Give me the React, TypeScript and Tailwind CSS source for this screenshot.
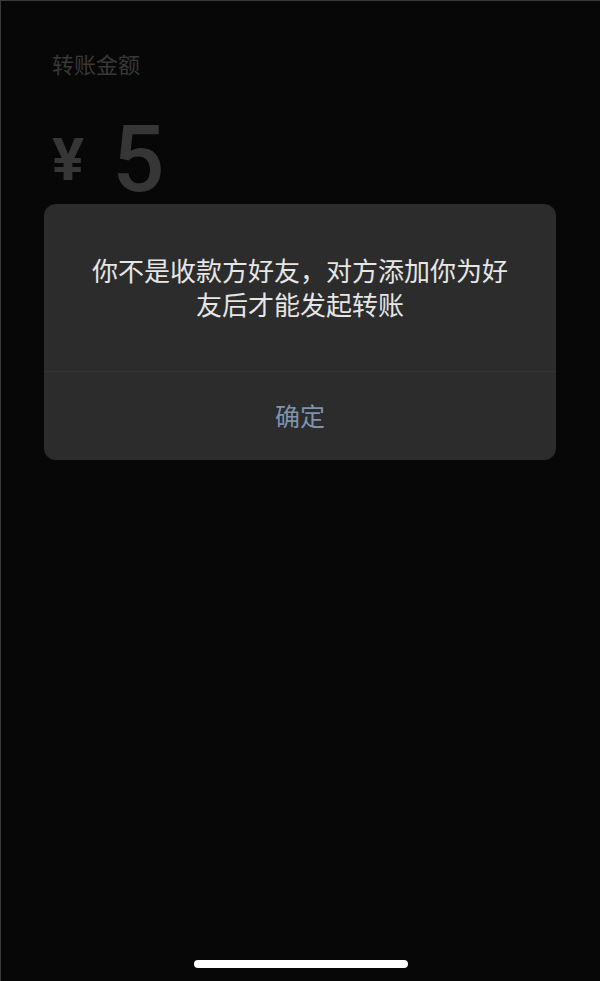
export default function App() {
  return (
    <div
      className="relative flex h-[981px] w-[600px] flex-col overflow-hidden border-l border-t border-[#3a3a3a] bg-[#070707]"
      style={{ fontFamily: '"Noto Sans CJK SC", "Noto Sans", sans-serif' }}
    >
      {/* page behind the alert */}
      <div className="flex flex-col px-[51px] pt-[47px]">
        <span className="text-[22px] leading-[30px] text-[#383838]">
          转账金额
        </span>
        <div className="mt-[36px] flex items-end gap-[28px]">
          <span className="mb-[16px] font-['Roboto',sans-serif] text-[60px] font-bold leading-none text-[#363636]">
            ¥
          </span>
          <span className="font-['Roboto',sans-serif] text-[92px] font-medium leading-none text-[#363636]">
            5
          </span>
        </div>
      </div>

      {/* alert */}
      <div className="absolute left-[43px] top-[203px] flex w-[512px] flex-col overflow-hidden rounded-[12px] bg-[#2c2c2c]">
        <div className="flex h-[167px] items-start justify-center px-[38px] pt-[49px]">
          <p className="text-center text-[26px] leading-[34px] text-[#e6e6e6]">
            你不是收款方好友，对方添加你为好友后才能发起转账
          </p>
        </div>
        <div className="h-px bg-[#343434]" />
        <button className="flex h-[88px] items-center justify-center text-[25px] text-[#7f93ad]">
          确定
        </button>
      </div>

      {/* home indicator */}
      <div className="mt-auto mb-[13px] flex justify-center">
        <div className="h-[8px] w-[214px] rounded-full bg-white" />
      </div>
    </div>
  );
}
